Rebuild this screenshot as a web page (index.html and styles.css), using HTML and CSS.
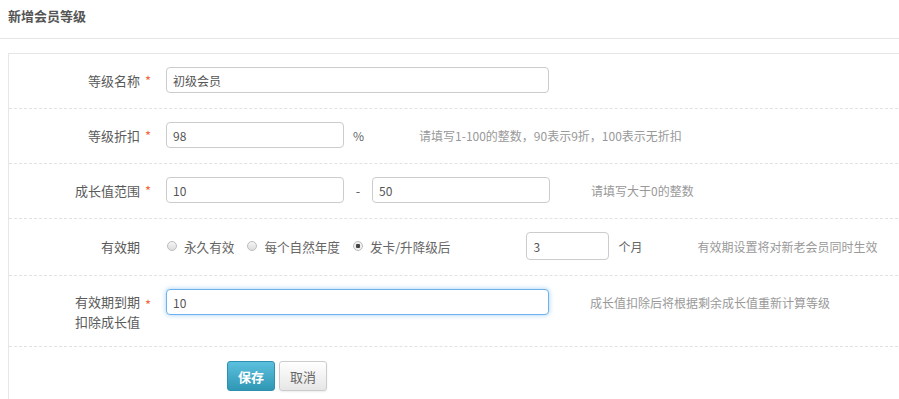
FILE: index.html
```html
<!DOCTYPE html>
<html lang="zh-CN">
<head>
  <meta charset="UTF-8">
  <title>新增会员等级</title>
  <link rel="stylesheet" href="styles.css">
</head>
<body>

  <div class="page-head">新增会员等级</div>

  <div class="panel">
    <!-- 等级名称 -->
    <div class="form-row">
      <label class="label">等级名称</label>
      <span class="req">*</span>
      <input class="input input-long" type="text" value="初级会员">
    </div>

    <!-- 等级折扣 -->
    <div class="form-row">
      <label class="label">等级折扣</label>
      <span class="req">*</span>
      <input class="input input-short" type="text" value="98">
      <span class="unit">%</span>
      <span class="hint hint-far">请填写1-100的整数，90表示9折，100表示无折扣</span>
    </div>

    <!-- 成长值范围 -->
    <div class="form-row">
      <label class="label">成长值范围</label>
      <span class="req">*</span>
      <input class="input input-short" type="text" value="10">
      <span class="dash">-</span>
      <input class="input input-short" type="text" value="50">
      <span class="hint">请填写大于0的整数</span>
    </div>

    <!-- 有效期 -->
    <div class="form-row row-valid">
      <label class="label">有效期</label>
      <span class="req"></span>
      <div class="radios">
        <label class="radio"><input type="radio" name="valid">永久有效</label>
        <label class="radio"><input type="radio" name="valid">每个自然年度</label>
        <label class="radio"><input type="radio" name="valid" checked>发卡/升降级后</label>
      </div>
      <input class="input input-month" type="text" value="3">
      <span class="unit">个月</span>
      <span class="hint hint-far">有效期设置将对新老会员同时生效</span>
    </div>

    <!-- 有效期到期扣除成长值 -->
    <div class="form-row row-top">
      <label class="label label-two">有效期到期<br>扣除成长值</label>
      <span class="req req-top">*</span>
      <input class="input input-long is-focus" type="text" value="10">
      <span class="hint hint-top">成长值扣除后将根据剩余成长值重新计算等级</span>
    </div>

    <div class="actions">
      <button class="btn btn-save">保存</button>
      <button class="btn btn-cancel">取消</button>
    </div>
  </div>

</body>
</html>
```

FILE: styles.css
```css
/* base */
body {
  margin: 0;
  overflow: hidden;
  font-family: "Noto Sans CJK SC", "Liberation Sans", sans-serif;
  font-size: 13px;
  color: #555;
  background: #fff;
}

/* page title */
.page-head {
  height: 38px;
  line-height: 32px;
  padding-left: 8px;
  font-weight: bold;
  color: #555;
  border-bottom: 1px solid #e5e5e5;
}

/* form panel */
.panel {
  margin: 14px -10px 0 8px;
  min-height: 400px;
  border: 1px solid #e6e6e6;
}

.form-row {
  display: flex;
  align-items: center;
  padding: 13px 0 15px;
  border-bottom: 1px dashed #e2e2e2;
}

.row-top {
  align-items: flex-start;
  padding-bottom: 14px;
}

.label {
  width: 131px;
  text-align: right;
  color: #5a5a5a;
}

.label-two {
  margin-top: 3px;
  line-height: 20px;
}

.req {
  width: 21px;
  padding-left: 5px;
  color: #f5653f;
}

.req-top {
  margin-top: 6px;
}

.input {
  box-sizing: border-box;
  height: 26px;
  padding: 0 6px;
  border: 1px solid #ccc;
  border-radius: 4px;
  font-family: inherit;
  font-size: 12px;
  color: #555;
  outline: none;
}

.input-long {
  width: 383px;
}

.input-short {
  width: 178px;
}

.input-month {
  width: 83px;
  height: 28px;
  margin-left: 76px;
}

.is-focus {
  border-color: #6cb3ee;
  box-shadow: 0 0 5px rgba(102, 175, 233, 0.6);
}

.unit {
  margin-left: 9px;
  font-size: 12px;
  color: #666;
}

.dash {
  width: 28px;
  text-align: center;
  color: #666;
}

.hint {
  margin-left: 41px;
  font-size: 12px;
  color: #999;
}

.hint-far {
  margin-left: 55px;
}

.hint-top {
  margin-top: 5px;
}

/* radios */
.radios {
  display: flex;
  gap: 12px;
}

.radio {
  display: flex;
  align-items: center;
  font-size: 12.6px;
  color: #666;
}

.radio input {
  appearance: none;
  width: 10px;
  height: 10px;
  margin: 0 7px 0 1px;
  border: 1px solid #bcbcbc;
  border-radius: 50%;
  background: linear-gradient(#f6f6f6, #dcdcdc);
}

.radio input:checked {
  background: radial-gradient(circle, #444 0, #444 2px, #eee 2.5px);
}

/* buttons */
.actions {
  display: flex;
  gap: 4px;
  padding: 14px 0 0 218px;
}

.btn {
  width: 48px;
  height: 30px;
  border-radius: 3px;
  font-family: inherit;
  font-size: 13px;
  cursor: pointer;
}

.btn-save {
  border: 1px solid #2f8fb0;
  background: linear-gradient(#5bc0de, #2f96b4);
  color: #fff;
  font-weight: bold;
}

.btn-cancel {
  border: 1px solid #ccc;
  background: linear-gradient(#fff, #e6e6e6);
  color: #666;
  box-shadow: 0 1px 2px rgba(0, 0, 0, 0.08);
}
```
